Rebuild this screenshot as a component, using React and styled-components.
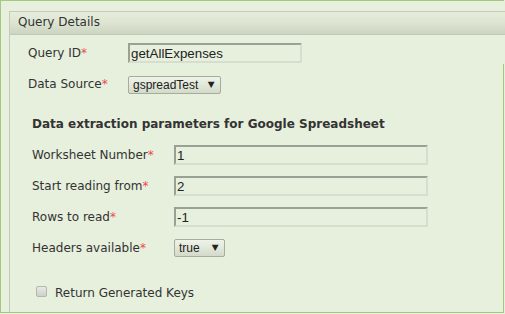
import React from "react";
import styled, { createGlobalStyle } from "styled-components";

const Global = createGlobalStyle`
  html, body { margin: 0; padding: 0; background: #e7efdd; overflow: hidden; }
  * { box-sizing: border-box; }
`;

const Frame = styled.div`
  position: relative;
  width: 504px;
  border-top: 1px solid #a3c87f;
  border-left: 1px solid #a3c87f;
  border-bottom: 1px solid #a3c87f;
  padding: 10px 0 0 8px;
  &::after {
    content: "";
    position: absolute;
    right: 0;
    top: 63px;
    bottom: 0;
    width: 1px;
    background: #a3c87f;
  }
`;

const Panel = styled.div`
  width: calc(100% + 20px);
  border-top: 1px solid #c4cbba;
  border-left: 1px solid #c4cbba;
`;

const Header = styled.div`
  height: 23px;
  line-height: 20px;
  padding: 0 0 2px 8px;
  border-bottom: 1px solid #c2c9b8;
  background: linear-gradient(to bottom, #e6eddb 0%, #dde5d2 50%, #cbd3c1 100%);
  font-family: "DejaVu Sans", Verdana, sans-serif;
  font-size: 12px;
  color: #333;
`;

const Body = styled.div`
  padding: 3px 0 12px 0;
  font-family: "DejaVu Sans", Verdana, sans-serif;
  font-size: 12px;
  color: #333;
`;

const Row = styled.div`
  display: grid;
  grid-template-columns: ${(p) => p.$label}px auto;
  height: 31px;
  align-items: start;
  padding-left: ${(p) => p.$indent}px;
`;

const Label = styled.div`
  line-height: 14px;
  padding-top: 8px;
  white-space: nowrap;
`;

const Req = styled.span`
  color: #ee4a4a;
`;

const TextInput = styled.input`
  display: block;
  margin-top: 5px;
  width: ${(p) => p.$w}px;
  height: 20px;
  border: 2px solid;
  border-color: #9ba094 #d7decd #d7decd #9ba094;
  background: #e7efdd;
  padding: 0 1px;
  font-family: "Liberation Sans", Arial, sans-serif;
  font-size: 13.33px;
  color: #222;
  outline: none;
`;

const SelectBox = styled.div`
  display: flex;
  align-items: center;
  justify-content: space-between;
  margin-top: ${(p) => p.$top}px;
  width: ${(p) => p.$w}px;
  height: 18px;
  padding: 0 6px 0 ${(p) => p.$pl}px;
  border: 1px solid #a7ad9e;
  border-radius: 2px;
  background: linear-gradient(to bottom, #eff3ea 0%, #e2e8d9 50%, #d3dac9 100%);
  font-family: "Liberation Sans", Arial, sans-serif;
  font-size: 12px;
  color: #222;
`;

const Arrow = styled.span`
  font-family: "DejaVu Sans", sans-serif;
  font-size: 8px;
  color: #222;
  line-height: 1;
  transform: scaleX(1.1);
`;

const Heading = styled.div`
  margin: 17px 0 9px 22px;
  font-weight: bold;
  line-height: 14px;
  white-space: nowrap;
`;

const CheckRow = styled.label`
  display: flex;
  align-items: flex-start;
  gap: 8px;
  margin: 22px 0 0 26px;
  line-height: 14px;
`;

const Check = styled.span`
  display: block;
  width: 11px;
  height: 11px;
  border: 1px solid #b3b8ad;
  border-radius: 2px;
  background: linear-gradient(to bottom, #e8eae4 0%, #cdd0c8 100%);
`;

export default function App() {
  return (
    <>
      <Global />
      <Frame>
        <Panel>
          <Header>Query Details</Header>
          <Body>
            <Row $label={100} $indent={18}>
              <Label>Query ID<Req>*</Req></Label>
              <TextInput $w={174} defaultValue="getAllExpenses" />
            </Row>
            <Row $label={100} $indent={18}>
              <Label>Data Source<Req>*</Req></Label>
              <SelectBox $w={93} $top={7} $pl={4}>
                <span>gspreadTest</span>
                <Arrow>▼</Arrow>
              </SelectBox>
            </Row>
            <Heading>Data extraction parameters for Google Spreadsheet</Heading>
            <Row $label={142} $indent={22}>
              <Label>Worksheet Number<Req>*</Req></Label>
              <TextInput $w={254} defaultValue="1" />
            </Row>
            <Row $label={142} $indent={22}>
              <Label>Start reading from<Req>*</Req></Label>
              <TextInput $w={254} defaultValue="2" />
            </Row>
            <Row $label={142} $indent={22}>
              <Label>Rows to read<Req>*</Req></Label>
              <TextInput $w={254} defaultValue="-1" />
            </Row>
            <Row $label={142} $indent={22}>
              <Label>Headers available<Req>*</Req></Label>
              <SelectBox $w={51} $top={6} $pl={4}>
                <span>true</span>
                <Arrow>▼</Arrow>
              </SelectBox>
            </Row>
            <CheckRow>
              <Check />
              <span>Return Generated Keys</span>
            </CheckRow>
          </Body>
        </Panel>
      </Frame>
    </>
  );
}
